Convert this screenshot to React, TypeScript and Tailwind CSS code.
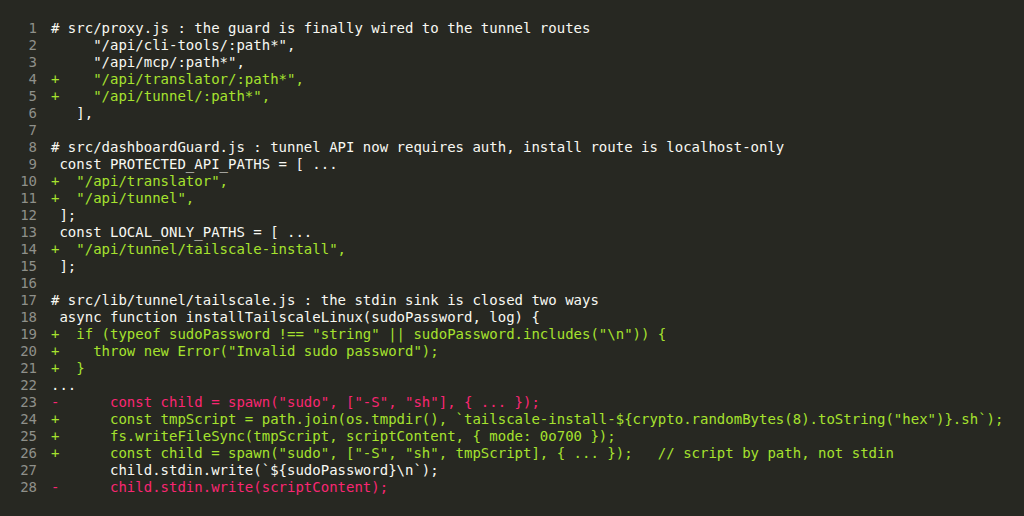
import React from "react";

type Kind = "n" | "a" | "d";
const lines: [Kind, string][] = [
  ["n", "# src/proxy.js : the guard is finally wired to the tunnel routes"],
  ["n", '     "/api/cli-tools/:path*",'],
  ["n", '     "/api/mcp/:path*",'],
  ["a", '+    "/api/translator/:path*",'],
  ["a", '+    "/api/tunnel/:path*",'],
  ["n", "   ],"],
  ["n", ""],
  ["n", "# src/dashboardGuard.js : tunnel API now requires auth, install route is localhost-only"],
  ["n", " const PROTECTED_API_PATHS = [ ..."],
  ["a", '+  "/api/translator",'],
  ["a", '+  "/api/tunnel",'],
  ["n", " ];"],
  ["n", " const LOCAL_ONLY_PATHS = [ ..."],
  ["a", '+  "/api/tunnel/tailscale-install",'],
  ["n", " ];"],
  ["n", ""],
  ["n", "# src/lib/tunnel/tailscale.js : the stdin sink is closed two ways"],
  ["n", " async function installTailscaleLinux(sudoPassword, log) {"],
  ["a", '+  if (typeof sudoPassword !== "string" || sudoPassword.includes("\\n")) {'],
  ["a", '+    throw new Error("Invalid sudo password");'],
  ["a", "+  }"],
  ["n", "..."],
  ["d", '-      const child = spawn("sudo", ["-S", "sh"], { ... });'],
  ["a", '+      const tmpScript = path.join(os.tmpdir(), `tailscale-install-${crypto.randomBytes(8).toString("hex")}.sh`);'],
  ["a", "+      fs.writeFileSync(tmpScript, scriptContent, { mode: 0o700 });"],
  ["a", '+      const child = spawn("sudo", ["-S", "sh", tmpScript], { ... });   // script by path, not stdin'],
  ["n", "       child.stdin.write(`${sudoPassword}\\n`);"],
  ["d", "-      child.stdin.write(scriptContent);"],
];

const color: Record<Kind, string> = {
  n: "text-[#f8f8f2]",
  a: "text-[#a6e22e]",
  d: "text-[#f92672]",
};

export default function App() {
  return (
    <div
      className="w-[1024px] h-[516px] overflow-hidden bg-[#272822] pt-[20px] text-[14px] leading-[17px]"
      style={{ fontFamily: '"DejaVu Sans Mono", monospace' }}
    >
      {lines.map(([k, t], i) => (
        <div key={i} className="flex h-[17px]">
          <div className="w-[37px] shrink-0 text-right text-[#8f908a]">{i + 1}</div>
          <div className={`ml-[14px] whitespace-pre ${color[k]}`}>{t}</div>
        </div>
      ))}
    </div>
  );
}
